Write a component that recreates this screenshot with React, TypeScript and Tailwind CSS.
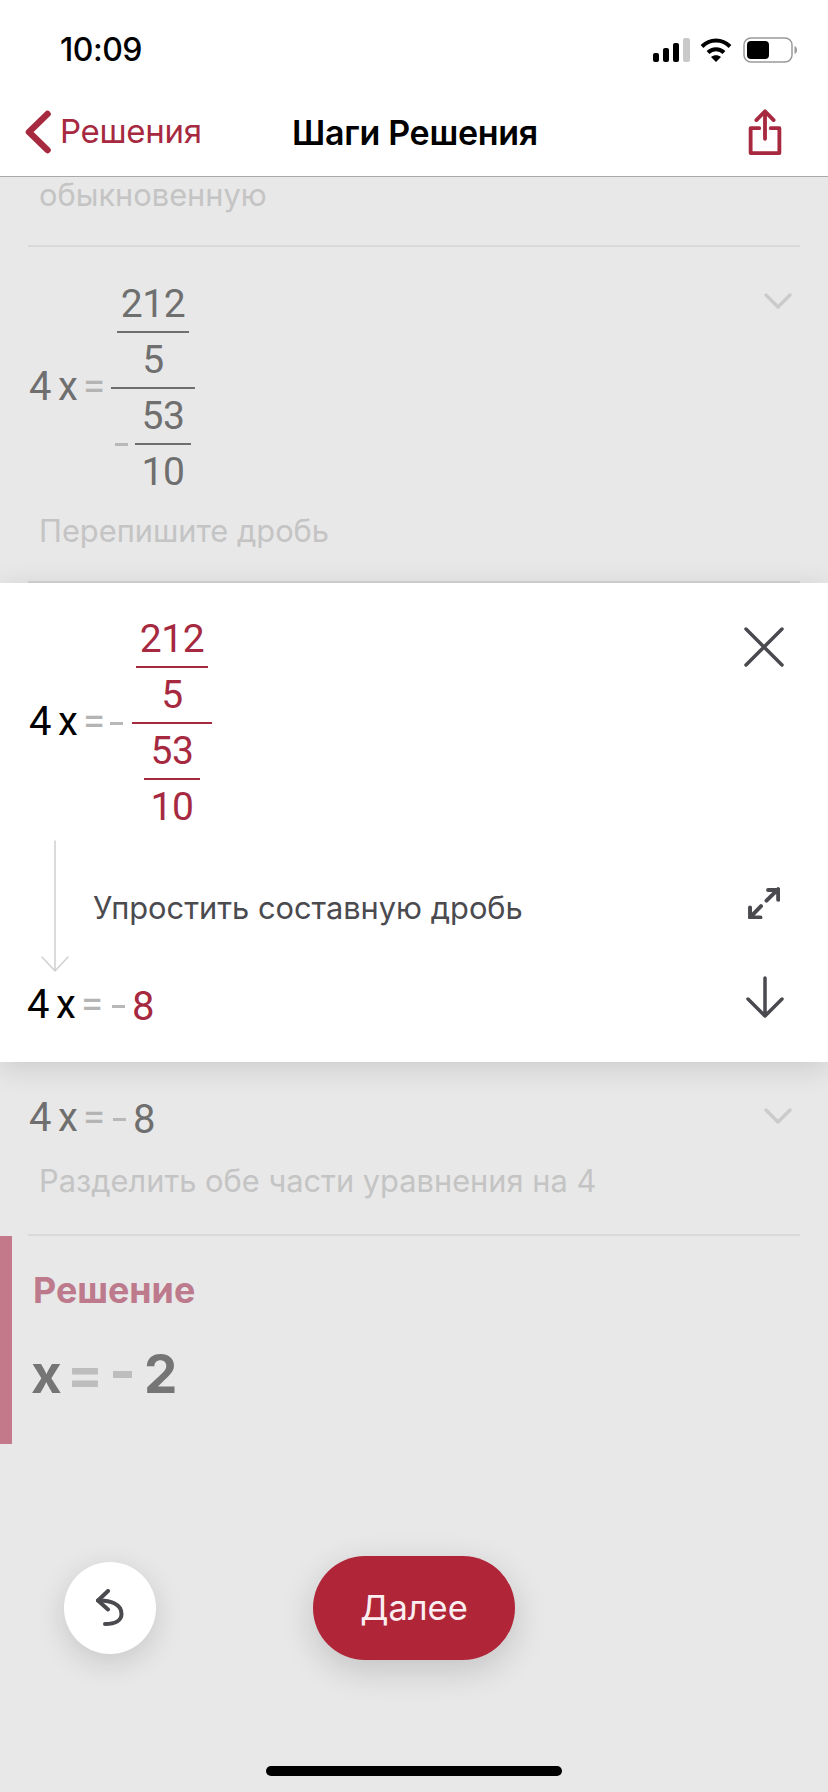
const INK = "#000000";
const GREY = "#6f6f6f";
const RED = "#a6293f";

function Digit({ children, color }: { children: React.ReactNode; color: string }) {
  return (
    <span className="flex h-[54px] items-center justify-center font-['Roboto',sans-serif] text-[39px] tracking-[-0.4px]" style={{ color }}>
      {children}
    </span>
  );
}

function Small({ num, den, color }: { num: string; den: string; color: string }) {
  return (
    <div className="flex flex-col items-center">
      <Digit color={color}>{num}</Digit>
      <div className="h-[2px] w-full" style={{ backgroundColor: color }} />
      <Digit color={color}>{den}</Digit>
    </div>
  );
}

function Lhs({ color }: { color: string }) {
  return (
    <div className="-mt-[3px] flex items-center pl-[1px] font-['Roboto',sans-serif] text-[40px]" style={{ color }}>
      <span className="w-[29px]">4</span>
      <span className="w-[25px]">x</span>
      <span className="w-[27px] text-[#b4b4b4]">=</span>
    </div>
  );
}

function Minus({ color = "#b8b8b8", cls = "w-[13px]" }: { color?: string; cls?: string }) {
  return <div className={`h-[3px] ${cls}`} style={{ backgroundColor: color }} />;
}

function ChevronDown() {
  return (
    <svg width="28" height="16" viewBox="0 0 28 16" fill="none" stroke="#cbcbcb" strokeWidth="3.500" strokeLinecap="round" strokeLinejoin="round">
      <path d="M2 2l12 12 12-12" />
    </svg>
  );
}

export default function App() {
  return (
    <div className="relative h-[1792px] w-[828px] overflow-hidden bg-[#e8e8e8] font-['Inter',sans-serif]">
      {/* top bars */}
      <div className="h-[177px] border-b border-[#a9a9a9] bg-white">
        <div className="flex h-[100px] items-start justify-between pl-[60px] pr-[31px] pt-[30px]">
          <span className="text-[32px] leading-[40px] font-medium tracking-[-0.5px] text-black">10:09</span>
          <div className="flex items-center gap-[10px] pt-[7px]">
            <svg width="37" height="24" viewBox="0 0 37 24" fill="#000">
              <rect x="0" y="15" width="6" height="9" rx="2" />
              <rect x="10" y="10" width="6" height="14" rx="2" />
              <rect x="20" y="5" width="6" height="19" rx="2" />
              <rect x="30" y="0" width="7" height="24" rx="2" fill="#c9c9c9" />
            </svg>
            <svg width="32" height="24" viewBox="0 0 32 24" fill="none" stroke="#000" strokeWidth="4">
              <path d="M2 8.500c8-8 20-8 28 0" />
              <path d="M8 14.500c4.500-4.500 11.500-4.500 16 0" />
              <path d="M16 24l-5-5c2.800-2.500 7.200-2.500 10 0z" fill="#000" stroke="none" />
            </svg>
            <svg className="ml-[1px]" width="54" height="26" viewBox="0 0 54 26" fill="none">
              <rect x="1" y="1" width="48" height="24" rx="7" stroke="#9a9a9a" strokeWidth="1.500" />
              <rect x="4" y="4" width="22" height="18" rx="4" fill="#000" />
              <path d="M51.500 9c2 .8 2.500 2.500 2.500 4s-.5 3.200-2.500 4z" fill="#9a9a9a" />
            </svg>
          </div>
        </div>
        <div className="relative flex h-[76px] items-center justify-between pb-[12px] pl-[25px] pr-[46px]">
          <div className="flex items-center gap-[9px]">
            <svg width="26" height="44" viewBox="0 0 26 44" fill="none" stroke={RED} strokeWidth="6.500" strokeLinecap="round" strokeLinejoin="round">
              <path d="M22.500 4L4 22l18.500 18" />
            </svg>
            <span className="text-[33px] tracking-[-0.3px] text-[#a6293f]">Решения</span>
          </div>
          <span className="absolute left-[292px] text-[34px] font-semibold tracking-[-0.3px] text-black">Шаги Решения</span>
          <svg width="34" height="46" viewBox="0 0 34 48" fill="none" stroke={RED} strokeWidth="4" strokeLinecap="round" strokeLinejoin="round">
            <path d="M17 31V3M8 11.500L17 2.500l9 9" />
            <path d="M11 20H2v26h30V20h-9" />
          </svg>
        </div>
      </div>

      {/* previous step tail */}
      <div className="mx-[28px] h-[70px] border-b-2 border-[#d9d9d9]">
        <p className="pl-[11px] text-[30.800px] leading-[36px] text-[#c4c4c4]">обыкновенную</p>
      </div>

      {/* step: rewrite fraction */}
      <div className="mx-[28px] h-[336px] border-b-2 border-[#d4d4d4] pt-[30px]">
        <div className="flex items-start justify-between pr-[8px]">
          <div className="flex items-center">
            <Lhs color={GREY} />
            <div className="ml-[1px] flex flex-col items-stretch px-[4px]">
              <div className="flex justify-center">
                <div className="w-[72px]"><Small num="212" den="5" color={GREY} /></div>
              </div>
              <div className="-mx-[4px] h-[2px] bg-[#6f6f6f]" />
              <div className="flex items-center justify-center">
                <Minus cls="w-[13px] mr-[7px]" />
                <div className="w-[56px]"><Small num="53" den="10" color={GREY} /></div>
              </div>
            </div>
          </div>
          <div className="pt-[16px]"><ChevronDown /></div>
        </div>
        <p className="pl-[11px] pt-[14px] text-[30.800px] leading-[36px] text-[#c4c4c4]">Перепишите дробь</p>
      </div>

      {/* active step */}
      <div className="relative bg-white shadow-[0_6px_28px_rgba(0,0,0,0.13)]">
        <div className="flex h-[256px] items-start justify-between pl-[28px] pr-[44px] pt-[29px]">
          <div className="flex items-center">
            <Lhs color={INK} />
            <Minus cls="w-[13px] mr-[9px]" />
            <div className="flex flex-col items-stretch px-[4px]">
              <div className="w-[72px]"><Small num="212" den="5" color={RED} /></div>
              <div className="-mx-[4px] h-[2px] bg-[#a6293f]" />
              <div className="flex justify-center">
                <div className="w-[56px]"><Small num="53" den="10" color={RED} /></div>
              </div>
            </div>
          </div>
          <svg className="mt-[15px]" width="40" height="40" viewBox="0 0 40 40" fill="none" stroke="#4a4a4f" strokeWidth="3.500" strokeLinecap="round">
            <path d="M2 2l36 36M38 2L2 38" />
          </svg>
        </div>
        <div className="flex h-[139px] items-center justify-between pl-[41px] pr-[48px]">
          <svg className="-mt-[5px]" width="28" height="132" viewBox="0 0 28 132" fill="none" stroke="#d0d0d0" strokeWidth="1.500" strokeLinecap="round" strokeLinejoin="round">
            <path d="M14 1v130M1 117l13 14 13-14" />
          </svg>
          <p className="-mt-[2px] ml-[24px] flex-1 text-[30.800px] leading-[40px] text-[#4a4a4f]">Упростить составную дробь</p>
          <svg className="-mt-[12px]" width="33" height="33" viewBox="0 0 36 36" fill="none" stroke="#4a4a4f" strokeWidth="4.300" strokeLinecap="round" strokeLinejoin="round">
            <path d="M21.300 16L34 3.300M23 4.300h11V15M15.300 22L3.300 34.300M3.300 23.300v11h11.400" />
          </svg>
        </div>
        <div className="flex h-[84px] items-start justify-between pl-[26px] pr-[44px]">
          <div className="flex items-center">
            <Lhs color={INK} />
            <Minus cls="w-[13px] ml-[4px] mr-[7px]" />
            <span className="font-['Roboto',sans-serif] text-[40px] leading-[48px] text-[#a6293f]">8</span>
          </div>
          <svg className="-mt-[2px]" width="38" height="42" viewBox="0 0 38 42" fill="none" stroke="#4a4a4f" strokeWidth="3.500" strokeLinecap="round" strokeLinejoin="round">
            <path d="M19 2v38M2 23l17 17 17-17" />
          </svg>
        </div>
      </div>

      {/* step: divide */}
      <div className="mx-[28px] h-[174px] border-b-2 border-[#d9d9d9] pt-[29px]">
        <div className="flex items-start justify-between pr-[8px]">
          <div className="flex items-center">
            <Lhs color={GREY} />
            <Minus cls="w-[13px] ml-[3px] mr-[7px]" />
            <span className="font-['Roboto',sans-serif] text-[40px] leading-[48px] text-[#6f6f6f]">8</span>
          </div>
          <div className="pt-[17px]"><ChevronDown /></div>
        </div>
        <p className="pl-[11px] pt-[15px] text-[30.800px] leading-[36px] text-[#c4c4c4]">Разделить обе части уравнения на 4</p>
      </div>

      {/* solution */}
      <div className="h-[208px] border-l-[12px] border-[#c4798b] pl-[21px] pt-[32px]">
        <p className="text-[35.800px] leading-[44px] font-bold text-[#bd7a8c]">Решение</p>
        <div className="-ml-[2px] flex items-center pt-[30px] text-[53px] leading-[64px] font-bold text-[#757575]">
          <span className="w-[36px]">x</span>
          <span className="w-[46px] text-[#bdbdbd]">=</span>
          <Minus color="#bdbdbd" cls="h-[7px] w-[19px] mr-[12px]" />
          <span>2</span>
        </div>
      </div>

      {/* floating actions */}
      <button className="absolute left-[64px] top-[1562px] flex h-[92px] w-[92px] items-center justify-center rounded-full bg-white shadow-[0_8px_30px_rgba(0,0,0,0.14)]">
        <svg width="28" height="38" viewBox="0 0 28 38" fill="none" stroke="#4a4a4f" strokeWidth="4" strokeLinecap="round" strokeLinejoin="round">
          <path d="M12 2L2 11.500l10 9" />
          <path d="M2 11.500c12-.5 23.500 3.500 23.500 13.500 0 6-5.500 10-16.500 10" />
        </svg>
      </button>
      <button className="absolute left-[313px] top-[1556px] flex h-[104px] w-[202px] items-center justify-center rounded-full bg-[#b12538] text-[34.500px] text-[#fbeef0] shadow-[0_10px_34px_rgba(0,0,0,0.16)]">
        Далее
      </button>
      <div className="absolute left-[266px] top-[1766px] h-[10px] w-[296px] rounded-full bg-black" />
    </div>
  );
}
